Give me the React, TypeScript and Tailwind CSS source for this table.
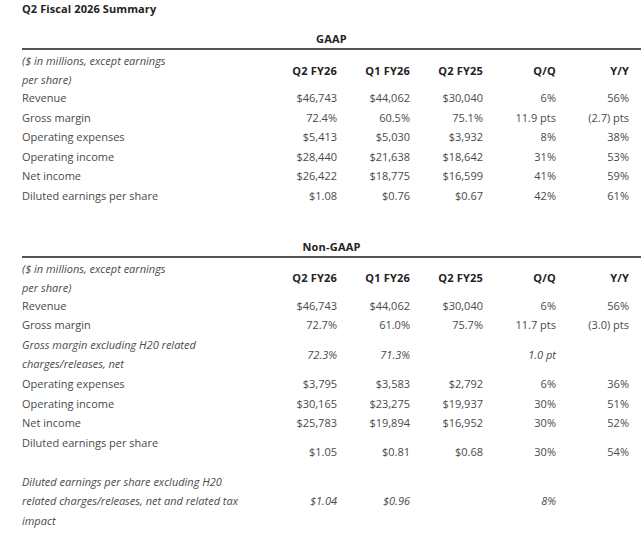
const cols = ['Q2 FY26', 'Q1 FY26', 'Q2 FY25', 'Q/Q', 'Y/Y'];

type Row = {
  label: string[];
  values: string[];
  italic?: boolean;
  topLabel?: boolean;
  tall?: boolean;
};

const gaap: Row[] = [
  { label: ['Revenue'], values: ['$46,743', '$44,062', '$30,040', '6%', '56%'] },
  { label: ['Gross margin'], values: ['72.4%', '60.5%', '75.1%', '11.9 pts', '(2.7) pts'] },
  { label: ['Operating expenses'], values: ['$5,413', '$5,030', '$3,932', '8%', '38%'] },
  { label: ['Operating income'], values: ['$28,440', '$21,638', '$18,642', '31%', '53%'] },
  { label: ['Net income'], values: ['$26,422', '$18,775', '$16,599', '41%', '59%'] },
  { label: ['Diluted earnings per share'], values: ['$1.08', '$0.76', '$0.67', '42%', '61%'] },
];

const nonGaap: Row[] = [
  { label: ['Revenue'], values: ['$46,743', '$44,062', '$30,040', '6%', '56%'] },
  { label: ['Gross margin'], values: ['72.7%', '61.0%', '75.7%', '11.7 pts', '(3.0) pts'] },
  {
    label: ['Gross margin excluding H20 related', 'charges/releases, net'],
    values: ['72.3%', '71.3%', '', '1.0 pt', ''],
    italic: true,
  },
  { label: ['Operating expenses'], values: ['$3,795', '$3,583', '$2,792', '6%', '36%'] },
  { label: ['Operating income'], values: ['$30,165', '$23,275', '$19,937', '30%', '51%'] },
  { label: ['Net income'], values: ['$25,783', '$19,894', '$16,952', '30%', '52%'] },
  {
    label: ['Diluted earnings per share'],
    values: ['$1.05', '$0.81', '$0.68', '30%', '54%'],
    topLabel: true,
    tall: true,
  },
  {
    label: ['Diluted earnings per share excluding H20', 'related charges/releases, net and related tax', 'impact'],
    values: ['$1.04', '$0.96', '', '8%', ''],
    italic: true,
  },
];

function TableRow({ row }: { row: Row }) {
  return (
    <div className={`grid grid-cols-[242px_repeat(5,73px)] ${row.tall ? 'h-[39px]' : ''}`}>
      <div className={`${row.italic ? 'italic' : ''} ${row.topLabel ? 'self-start' : 'self-center'}`}>
        {row.label.map((l) => (
          <div key={l} className="leading-[19.6px]">{l}</div>
        ))}
      </div>
      {row.values.map((v, i) => (
        <div key={i} className={`self-center text-right leading-[19.6px] ${row.italic ? 'italic' : ''}`}>
          {v}
        </div>
      ))}
    </div>
  );
}

function Section({ title, rows }: { title: string; rows: Row[] }) {
  return (
    <div>
      <div className="text-center font-bold text-[11px] text-[#222] leading-[19px] tracking-[0.2px]">{title}</div>
      <div className="h-[2px] bg-[#555]" />
      <div className="grid grid-cols-[242px_repeat(5,73px)] pt-[1px]">
        <div className="italic">
          <div className="leading-[19px]">($ in millions, except earnings</div>
          <div className="leading-[19px]">per share)</div>
        </div>
        {cols.map((c) => (
          <div key={c} className="self-center text-right font-bold text-[#222] leading-[19px] tracking-[0.2px]">
            {c}
          </div>
        ))}
      </div>
      <div className="-mt-[1px]">
        {rows.map((r) => (
          <TableRow key={r.label[0] + r.values[0]} row={r} />
        ))}
      </div>
    </div>
  );
}

export default function App() {
  return (
    <div
      className="w-[641px] h-[533px] bg-white pl-[22px] text-[11px] text-[#4a4a4a] overflow-hidden"
      style={{ fontFamily: '"Open Sans", "Liberation Sans", sans-serif' }}
    >
      <div className="pt-[1px] text-[11px] font-bold text-[#222] leading-[16px] tracking-[0.1px]">Q2 Fiscal 2026 Summary</div>
      <div className="mt-[12px]">
        <Section title="GAAP" rows={gaap} />
      </div>
      <div className="mt-[31px]">
        <Section title="Non-GAAP" rows={nonGaap} />
      </div>
    </div>
  );
}
